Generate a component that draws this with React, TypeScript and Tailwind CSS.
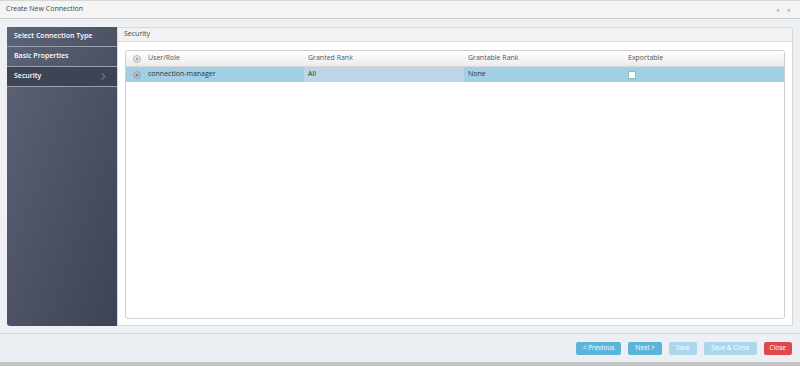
export default function App() {
  const cols = ["User/Role", "Granted Rank", "Grantable Rank", "Exportable"];
  return (
    <div className="w-[800px] h-[366px] flex flex-col bg-[#eef1f4] overflow-hidden" style={{ fontFamily: '"Open Sans", sans-serif' }}>
      {/* Title bar */}
      <div className="h-[19px] shrink-0 flex items-center justify-between px-[6px] bg-[#f4f4f4] border-t border-[#d6d6d6] border-b border-b-[#cfcfcf]">
        <span className="text-[7px] text-[#444]">Create New Connection</span>
        <div className="flex items-center gap-[6px] text-[8px] text-[#999] pr-[3px]">
          <span>+</span>
          <span>×</span>
        </div>
      </div>

      {/* Body */}
      <div className="flex-1 flex px-[7px] pt-[8px] pb-[7px]">
        {/* Sidebar */}
        <div className="w-[110px] shrink-0 bg-gradient-to-br from-[#5d6477] to-[#3d4354] rounded-bl-[3px] flex flex-col">
          <div className="h-[20px] flex items-center px-[7px] border-b border-[#9aa0ad] text-[7px] font-semibold text-white">Select Connection Type</div>
          <div className="h-[20px] flex items-center px-[7px] border-b border-[#9aa0ad] text-[7px] font-semibold text-white">Basic Properties</div>
          <div className="h-[20px] flex items-center justify-between px-[7px] border-b border-[#9aa0ad] bg-[#3f4454] text-[7px] font-semibold text-white">
            <span>Security</span>
            <svg width="5" height="7" viewBox="0 0 5 7" className="mr-[4px]">
              <path d="M1 0.5 L4 3.5 L1 6.5" fill="none" stroke="#6fa8d6" strokeWidth="1" />
            </svg>
          </div>
        </div>

        {/* Main panel */}
        <div className="flex-1 flex flex-col bg-white border border-[#d4d7db] rounded-tr-[3px]">
          <div className="h-[14px] shrink-0 flex items-center px-[6px] bg-[#f2f2f2] border-b border-[#dcdcdc] text-[7px] text-[#444]">Security</div>
          <div className="flex-1 px-[7px] pt-[8px] pb-[6px]">
            <div className="h-full border border-[#cfcfcf] rounded-[3px] overflow-hidden">
              <div className="h-[16px] flex items-center bg-gradient-to-b from-white to-[#ececec] border-b border-[#d8d8d8] text-[7px] text-[#555]">
                <div className="w-[22px] flex justify-center">
                  <svg width="8" height="8" viewBox="0 0 8 8">
                    <circle cx="4" cy="4" r="3.4" fill="none" stroke="#888" strokeWidth="0.7" />
                    <path d="M4 2.2 V5.8 M2.2 4 H5.8" stroke="#777" strokeWidth="0.7" />
                  </svg>
                </div>
                {cols.map((c, i) => (
                  <div key={c} className={i === 0 ? "w-[156px]" : "w-[160px] pl-[4px]"}>{c}</div>
                ))}
              </div>
              <div className="h-[15px] flex items-stretch bg-[#a3cfe6] text-[7px] text-[#333]">
                <div className="w-[22px] flex justify-center items-center">
                  <svg width="8" height="8" viewBox="0 0 8 8">
                    <circle cx="4" cy="4" r="3.4" fill="none" stroke="#8a8a8a" strokeWidth="0.7" />
                    <circle cx="4" cy="4" r="1.3" fill="#d9534f" />
                  </svg>
                </div>
                <div className="w-[156px] flex items-center">connection-manager</div>
                <div className="w-[160px] flex items-center pl-[4px] bg-[#bcd6e5]">All</div>
                <div className="w-[160px] flex items-center pl-[4px]">None</div>
                <div className="w-[160px] flex items-center pl-[4px]">
                  <div className="w-[8px] h-[8px] bg-white border border-[#7fc6a4] rounded-[1px]" />
                </div>
              </div>
            </div>
          </div>
        </div>
      </div>

      {/* Footer */}
      <div className="h-[29px] shrink-0 flex items-center justify-end gap-[7px] px-[8px] border-t border-[#d4d7db] bg-[#eceff3]">
        <button className="h-[13px] px-[7px] rounded-[2px] bg-[#5bb5db] text-white text-[6.5px]">&lt; Previous</button>
        <button className="h-[13px] px-[7px] rounded-[2px] bg-[#5bb5db] text-white text-[6.5px]">Next &gt;</button>
        <button className="h-[13px] px-[7px] rounded-[2px] bg-[#a9d7ec] text-white text-[6.5px]">Save</button>
        <button className="h-[13px] px-[7px] rounded-[2px] bg-[#a9d7ec] text-white text-[6.5px]">Save &amp; Close</button>
        <button className="h-[13px] px-[6px] rounded-[2px] bg-[#e0474f] text-white text-[6.5px]">Close</button>
      </div>
      <div className="h-[4px] shrink-0 bg-[#c4c4c4]" />
    </div>
  );
}
